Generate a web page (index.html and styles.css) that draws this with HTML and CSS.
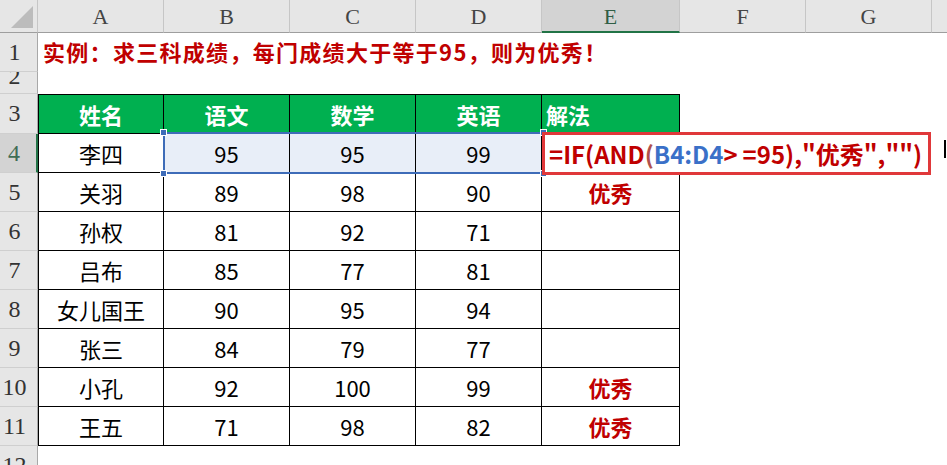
FILE: index.html
```html
<!DOCTYPE html>
<html lang="zh">
<head>
<meta charset="utf-8">
<link rel="stylesheet" href="styles.css">
</head>
<body>
<div class="sheet">
  <div class="ch corner"><span class="tri"></span></div>
  <div class="ch">A</div>
  <div class="ch">B</div>
  <div class="ch">C</div>
  <div class="ch">D</div>
  <div class="ch ch-sel">E</div>
  <div class="ch">F</div>
  <div class="ch">G</div>
  <div class="ch ch-last"></div>

  <div class="rh">1</div>
  <div class="title span-all">实例：求三科成绩，每门成绩大于等于95，则为优秀！</div>

  <div class="rh rh-short"><span>2</span></div>
  <div class="span-all"></div>

  <div class="rh">3</div>
  <div class="c hd first top">姓名</div>
  <div class="c hd top">语文</div>
  <div class="c hd top">数学</div>
  <div class="c hd top">英语</div>
  <div class="c hd top left">解法</div>
  <div class="span-rest"></div>

  <div class="rh rh-sel">4</div>
  <div class="c first">李四</div>
  <div class="c sel">95</div>
  <div class="c sel">95</div>
  <div class="c sel">99</div>
  <div class="c"></div>
  <div class="span-rest"></div>

  <div class="rh">5</div>
  <div class="c first">关羽</div>
  <div class="c">89</div>
  <div class="c">98</div>
  <div class="c">90</div>
  <div class="c good">优秀</div>
  <div class="span-rest"></div>

  <div class="rh">6</div>
  <div class="c first">孙权</div>
  <div class="c">81</div>
  <div class="c">92</div>
  <div class="c">71</div>
  <div class="c"></div>
  <div class="span-rest"></div>

  <div class="rh">7</div>
  <div class="c first">吕布</div>
  <div class="c">85</div>
  <div class="c">77</div>
  <div class="c">81</div>
  <div class="c"></div>
  <div class="span-rest"></div>

  <div class="rh">8</div>
  <div class="c first">女儿国王</div>
  <div class="c">90</div>
  <div class="c">95</div>
  <div class="c">94</div>
  <div class="c"></div>
  <div class="span-rest"></div>

  <div class="rh">9</div>
  <div class="c first">张三</div>
  <div class="c">84</div>
  <div class="c">79</div>
  <div class="c">77</div>
  <div class="c"></div>
  <div class="span-rest"></div>

  <div class="rh">10</div>
  <div class="c first">小孔</div>
  <div class="c">92</div>
  <div class="c">100</div>
  <div class="c">99</div>
  <div class="c good">优秀</div>
  <div class="span-rest"></div>

  <div class="rh">11</div>
  <div class="c first">王五</div>
  <div class="c">71</div>
  <div class="c">98</div>
  <div class="c">82</div>
  <div class="c good">优秀</div>
  <div class="span-rest"></div>

  <div class="rh">12</div>
  <div class="span-all"></div>

  <div class="selection">
    <span class="handle h-tl"></span>
    <span class="handle h-bl"></span>
    <span class="handle h-tr"></span>
    <span class="handle h-br"></span>
  </div>
  <div class="formula">=IF(AND<span class="paren">(</span><span class="ref">B4:D4</span>&gt;<span class="gap">=</span>95),"优秀","")</div>
  <div class="cursor"></div>
</div>
</body>
</html>
```

FILE: styles.css
```css
* { box-sizing: border-box; }
html, body { margin: 0; padding: 0; background: #fff; }
body { width: 947px; height: 465px; overflow: hidden; }

.sheet {
  position: relative;
  display: grid;
  grid-template-columns: 38px 126px 126px 126px 126px 138px 126px 126px 15px;
  grid-template-rows: 33px 39px 22px 40px repeat(8, 39px) 39px;
  font-family: "Noto Sans CJK SC", "Noto Sans", sans-serif;
  color: #000;
}

.ch {
  background: #e6e6e6;
  border-right: 1px solid #c6c6c6;
  border-bottom: 1px solid #9e9e9e;
  font-family: "Liberation Serif", serif;
  font-size: 22px;
  color: #444;
  display: flex;
  align-items: center;
  justify-content: center;
  padding-top: 2px;
}
.ch-last { border-right: none; }
.ch-sel {
  background: #d3d3d3;
  border-bottom: 2px solid #217346;
  color: #2f5e45;
}
.corner { position: relative; }
.tri {
  position: absolute;
  right: 4px;
  bottom: 4px;
  width: 0;
  height: 0;
  border-left: 22px solid transparent;
  border-bottom: 22px solid #bcbcbc;
}

.rh {
  background: #e6e6e6;
  border-bottom: 1px solid #cfcfcf;
  border-right: 1px solid #a8a8a8;
  font-family: "Liberation Serif", serif;
  font-size: 24px;
  color: #333;
  display: flex;
  align-items: center;
  justify-content: center;
  padding-right: 8px;
  overflow: hidden;
}
.rh-short { align-items: flex-end; padding-bottom: 5px; }
.rh-short span { line-height: 24px; }
.rh-sel {
  background: #d3d3d3;
  border-right: 2px solid #217346;
  color: #3f6d55;
}

.span-all { grid-column: 2 / 10; }
.span-rest { grid-column: 7 / 10; }

.title {
  color: #c00000;
  font-weight: bold;
  font-size: 22px;
  display: flex;
  align-items: center;
  padding-left: 5px;
  padding-bottom: 3px;
  letter-spacing: 1.3px;
}

.c {
  border-right: 1px solid #000;
  border-bottom: 1px solid #000;
  display: flex;
  align-items: center;
  justify-content: center;
  font-size: 22px;
  background: #fff;
}
.c.first { border-left: 1px solid #000; }
.c.top { border-top: 1px solid #000; }
.c.hd {
  background: #00b050;
  color: #fff;
  font-weight: bold;
  font-size: 22px;
}
.c.left { justify-content: flex-start; padding-left: 4px; }
.c.sel { background: #e8eef8; }
.c.good { color: #c00000; font-weight: bold; }

.selection {
  position: absolute;
  left: 163px;
  top: 132px;
  width: 381px;
  height: 42px;
  border: 2px solid #3e6cb8;
}
.handle {
  position: absolute;
  width: 7px;
  height: 7px;
  background: #3e6cb8;
  border: 1px solid #fff;
}
.h-tl { left: -5px; top: -5px; }
.h-bl { left: -5px; bottom: -5px; }
.h-tr { right: -5px; top: -5px; }
.h-br { right: -5px; bottom: -5px; }

.formula {
  position: absolute;
  left: 542px;
  top: 132px;
  width: 389px;
  height: 43px;
  border: 3px solid #e0383a;
  background: #fff;
  color: #c00000;
  font-weight: bold;
  font-size: 24px;
  display: flex;
  align-items: center;
  padding-left: 4px;
  white-space: pre;
}
.paren { color: #b0504c; }
.ref { color: #3a70c8; }
.gap { margin-left: 5px; }

.cursor {
  position: absolute;
  left: 944px;
  top: 140px;
  width: 2px;
  height: 18px;
  background: #000;
}
```
